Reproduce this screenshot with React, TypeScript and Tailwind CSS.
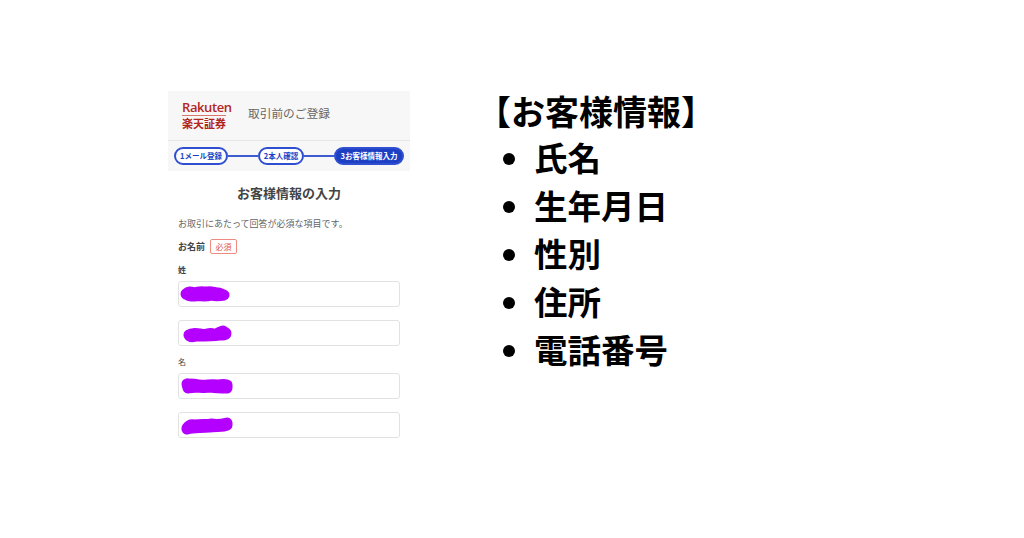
const cjk = { fontFamily: '"Noto Sans CJK JP", "Noto Sans", sans-serif' };

function Scribble({ d }: { d: string }) {
  return (
    <svg width="60" height="22" viewBox="0 0 60 22" fill="none" className="block">
      <path d={d} stroke="#b300ff" strokeWidth="11" strokeLinecap="round" strokeLinejoin="round" />
    </svg>
  );
}

function Field({ d, className }: { d: string; className?: string }) {
  return (
    <div className={`flex h-[26px] w-[222px] items-center rounded-[3px] border border-[#e2e2e2] bg-white ${className ?? ""}`}>
      <Scribble d={d} />
    </div>
  );
}

function Step({ children, active, width }: { children: React.ReactNode; active?: boolean; width: string }) {
  return (
    <span
      className={`flex h-[18px] shrink-0 items-center justify-center whitespace-nowrap rounded-full border-2 border-[#2f4fd0] text-[7.5px] font-bold leading-none ${width} ${
        active ? "border-[#1d3fc4] bg-[#1d3fc4] text-white" : "bg-white text-[#1d3fc4]"
      }`}
    >
      {children}
    </span>
  );
}

export default function App() {
  return (
    <div className="flex h-[538px] w-[1024px] overflow-hidden bg-white pl-[168px] pt-[91px] text-black" style={cjk}>
      {/* phone screenshot */}
      <div className="w-[242px] shrink-0">
        <div className="flex h-[50px] items-center border-b border-[#e6e6e6] bg-[#f7f7f7] pb-[5px] pl-[14px]">
          <div className="flex w-[48px] flex-col items-start text-[#b3261e]">
            <span className="pt-[2px] text-[13px] font-semibold leading-[16px] tracking-[-0.4px]" style={{ fontFamily: '"Open Sans", sans-serif' }}>
              Rakuten
            </span>
            <span className="h-px w-[44px] bg-[#d9766e]" />
            <span className="text-[11px] font-bold leading-[14px]">楽天証券</span>
          </div>
          <span className="ml-[18px] text-[11.7px] leading-none text-[#666]">取引前のご登録</span>
        </div>
        <div className="flex h-[30px] items-center bg-[#f7f7f7] pb-[1px] pl-[6px]">
          <Step width="w-[54px]">1メール登録</Step>
          <span className="h-[2px] w-[30px] bg-[#3f5bd0]" />
          <Step width="w-[46px]">2本人確認</Step>
          <span className="h-[2px] w-[30px] bg-[#3f5bd0]" />
          <Step width="w-[70px]" active>3お客様情報入力</Step>
        </div>

        <div className="pl-[10px]">
          <h1 className="mt-[13px] w-[222px] text-center text-[13px] font-bold leading-[18px] text-[#444]">お客様情報の入力</h1>
          <p className="mt-[15px] text-[9px] leading-[14px] text-[#666]">お取引にあたって回答が必須な項目です。</p>
          <div className="mt-[8px] flex h-[15px] items-center">
            <span className="text-[9px] font-bold leading-none text-[#444]">お名前</span>
            <span className="ml-[5px] flex h-[15px] w-[27px] items-center justify-center rounded-[2px] border border-[#ef8a80] text-[8px] leading-none text-[#e0564a]">
              必須
            </span>
          </div>
          <div className="mt-[10px] text-[8px] font-bold leading-[12px] text-[#444]">姓</div>
          <Field className="mt-[5px]" d="M7 11 C10 8 12 9 16 10 C20 8 24 9 28 9 C32 8 36 10 40 10 L45 12 C40 13 36 13 32 12 C26 14 20 12 16 13 C12 13 9 13 7 11" />
          <Field className="mt-[13px]" d="M10 13 C14 10 18 12 22 12 C26 14 30 10 34 12 C38 13 42 9 44 9 L47 11 C47 13 44 13 40 13 C34 14 24 14 18 14 C14 15 11 15 10 13" />
          <div className="mt-[10px] text-[8px] leading-[12px] text-[#444]">名</div>
          <Field className="mt-[5px]" d="M8 9 L9 13 C12 12 14 13 18 12 C24 13 28 12 32 12 C38 13 44 13 48 13 L48 10 C44 9 42 10 38 10 C32 9 26 11 20 10 C16 9 12 9 8 9" />
          <Field className="mt-[13px]" d="M8 14 C10 11 12 10 16 11 C22 10 28 11 32 10 C38 11 44 10 48 9 L48 11 C44 13 38 12 30 13 C22 14 14 13 8 15" />
        </div>
      </div>

      {/* info list */}
      <div className="ml-[80px] mt-[-2px] font-bold">
        <div className="ml-[-13px] text-[34px] leading-[44px]">【お客様情報】</div>
        <ul>
          {["氏名", "生年月日", "性別", "住所", "電話番号"].map((item) => (
            <li key={item} className="flex h-[48px] items-center text-[33.5px] leading-none">
              <span className="ml-[13px] mr-[19px] mt-[3px] h-[12px] w-[12px] rounded-full bg-black" />
              {item}
            </li>
          ))}
        </ul>
      </div>
    </div>
  );
}
